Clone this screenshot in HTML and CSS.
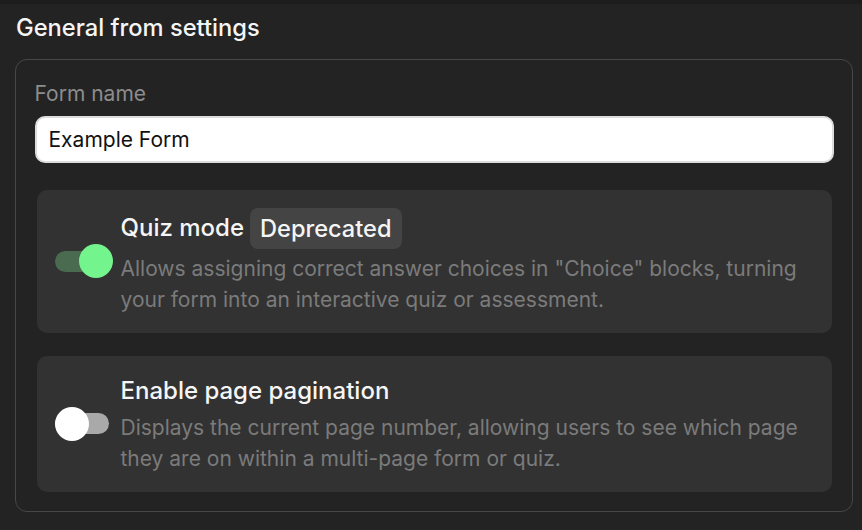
FILE: index.html
```html
<!DOCTYPE html>
<html lang="en">
<head>
<meta charset="utf-8">
<title>General from settings</title>
<link rel="stylesheet" href="styles.css">
</head>
<body>
<div class="topbar"></div>
<main class="page">
  <h1 class="heading">General from settings</h1>
  <section class="panel">
    <label class="field-label" for="form-name">Form name</label>
    <input class="text-input" id="form-name" type="text" value="Example Form">
    <div class="option-card">
      <div class="switch is-on"><span class="track"></span><span class="knob"></span></div>
      <div class="option-body">
        <div class="option-head">
          <span class="option-title">Quiz mode</span>
          <span class="badge">Deprecated</span>
        </div>
        <p class="option-desc">Allows assigning correct answer choices in "Choice" blocks, turning your form into an interactive quiz or assessment.</p>
      </div>
    </div>
    <div class="option-card">
      <div class="switch"><span class="track"></span><span class="knob"></span></div>
      <div class="option-body">
        <div class="option-head">
          <span class="option-title">Enable page pagination</span>
        </div>
        <p class="option-desc">Displays the current page number, allowing users to see which page they are on within a multi-page form or quiz.</p>
      </div>
    </div>
  </section>
</main>
</body>
</html>
```
FILE: styles.css
```css
* { box-sizing: border-box; }
html, body {
  margin: 0;
  padding: 0;
  background: #232323;
  font-family: Inter, "Noto Sans", "Liberation Sans", sans-serif;
  color: #f2f2f2;
}
.topbar {
  height: 4px;
  background: #1d1d1d;
}
.page {
  padding: 0 9px 0 15px;
}
.heading {
  margin: 0;
  padding: 10px 0 0 1px;
  height: 55px;
  font-size: 23.7px;
  line-height: 28px;
  font-weight: 500;
  color: #f5f5f5;
}
.panel {
  border: 1.5px solid #474747;
  border-radius: 12px;
  padding: 20.5px 18.5px 19.5px 18.5px;
  display: flex;
  flex-direction: column;
}
.field-label {
  font-size: 21px;
  line-height: 26px;
  color: #8c8c8c;
  margin-bottom: 9px;
}
.text-input {
  height: 47px;
  border: 2px solid #dcdcdc;
  border-radius: 10px;
  background: #ffffff;
  padding: 0 12px;
  font: inherit;
  font-size: 21px;
  color: #111;
  outline: none;
  margin-bottom: 27px;
}
.option-card {
  margin: 0 2px 23px 2px;
  background: #323232;
  border-radius: 10px;
  padding: 18px;
  display: flex;
  align-items: center;
  gap: 8px;
}
.option-card:last-child { margin-bottom: 0; }
.switch {
  position: relative;
  flex: 0 0 58px;
  height: 34px;
}
.switch .track {
  position: absolute;
  left: 0;
  top: 6.5px;
  width: 54px;
  height: 21px;
  border-radius: 11px;
  background: #a9a9a9;
}
.switch .knob {
  position: absolute;
  left: 0;
  top: 0;
  width: 34px;
  height: 34px;
  border-radius: 50%;
  background: #ffffff;
}
.switch.is-on .track { background: #4b6b50; }
.switch.is-on .knob { left: 24px; background: #74f48c; }
.option-body {
  flex: 1;
  min-width: 0;
  display: flex;
  flex-direction: column;
  gap: 4px;
}
.option-head {
  display: flex;
  align-items: center;
  gap: 6px;
  min-height: 34px;
}
.option-title {
  font-size: 24px;
  line-height: 28px;
  font-weight: 500;
  color: #f5f5f5;
}
.badge {
  background: #444444;
  border-radius: 8px;
  padding: 0 10px;
  height: 41px;
  display: inline-flex;
  align-items: center;
  font-size: 23.6px;
  font-weight: 500;
  color: #f5f5f5;
}
.option-desc {
  margin: 0;
  font-size: 21px;
  line-height: 31px;
  color: #7b7b7b;
}
```
